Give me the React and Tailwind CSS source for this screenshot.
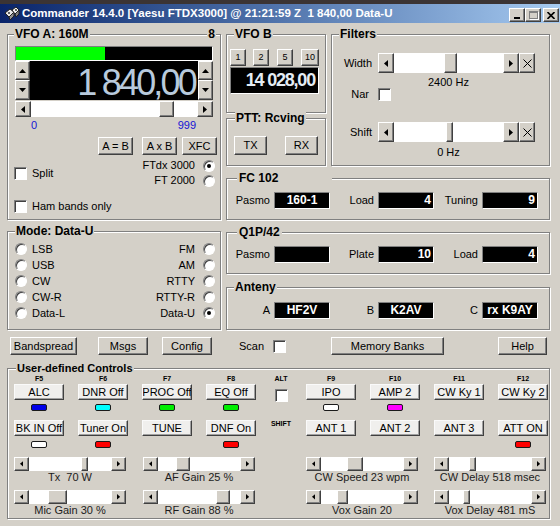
import React from 'react';

// classic 3D borders
const raised = 'border border-t-white border-l-white border-r-[#404040] border-b-[#404040] shadow-[inset_-1px_-1px_0_#808080]';
const sunken = 'border border-t-[#808080] border-l-[#808080] border-r-white border-b-white';

function Group({ title, className = '', tx = 'ml-[6px]', tt = 'text-[12px]', children }) {
  return (
    <div className={`border border-[#808080] shadow-[inset_1px_1px_0_#fff,1px_1px_0_#fff] shrink-0 ${className}`}>
      <div className={`-mt-[8px] w-fit px-[1px] bg-[#d4d0c8] font-bold leading-[14px] whitespace-pre ${tt} ${tx}`}>{title}</div>
      {children}
    </div>
  );
}

function Btn({ className = '', children }) {
  return (
    <div className={`${raised} bg-[#d4d0c8] shrink-0 flex items-center justify-center whitespace-nowrap ${className}`}>
      {children}
    </div>
  );
}

function Arrow({ dir, className = '', small }) {
  const pts = { left: '4,0 0,3.5 4,7', right: '0,0 4,3.5 0,7', up: '0,4 3.5,0 7,4', down: '0,0 3.5,4 7,0' };
  const horiz = dir === 'left' || dir === 'right';
  const s = small ? 0.8 : 1;
  return (
    <div className={`${raised} bg-[#d4d0c8] flex items-center justify-center shrink-0 ${className}`}>
      <svg width={(horiz ? 4 : 7) * s} height={(horiz ? 7 : 4) * s} viewBox={horiz ? '0 0 4 7' : '0 0 7 4'}>
        <polygon points={pts[dir]} fill="#000" />
      </svg>
    </div>
  );
}

function HSlider({ className = '', left, thumb, arrow = 'w-[16px]', small }) {
  return (
    <div className={`flex shrink-0 ${className}`}>
      <Arrow dir="left" className={arrow} small={small} />
      <div className="flex-1 flex bg-white">
        <div className="shrink-0" style={{ width: left }} />
        <div className={`${raised} bg-[#d4d0c8] shrink-0`} style={{ width: thumb }} />
      </div>
      <Arrow dir="right" className={arrow} small={small} />
    </div>
  );
}

function Check({ className = '' }) {
  return <div className={`${sunken} w-[13px] h-[13px] bg-white shrink-0 shadow-[inset_1px_1px_0_#404040] ${className}`} />;
}

function Radio({ checked, className = '' }) {
  return (
    <div className={`w-[12px] h-[12px] rounded-full bg-white shrink-0 flex items-center justify-center ${sunken} shadow-[inset_1px_1px_0_#404040] ${className}`}>
      {checked && <div className="w-[4px] h-[4px] rounded-full bg-black" />}
    </div>
  );
}

function Display({ className = '', children }) {
  return (
    <div className={`${sunken} bg-black text-white font-bold text-[12px] leading-[15px] shrink-0 ${className}`}>{children}</div>
  );
}

function Field({ label, value, w = 'w-[104px]', align = 'justify-end' }) {
  return (
    <div className={`flex items-center justify-end shrink-0 ${w}`}>
      <span>{label}</span>
      <Display className={`ml-[4px] w-[56px] h-[17px] flex items-center px-[2px] ${align}`}>{value}</Display>
    </div>
  );
}

function Led({ color, className = '' }) {
  if (!color) return <div className={`h-[7px] ${className}`} />;
  return <div className={`w-[16px] h-[7px] rounded-[2px] border border-[#1a1a1a] ${color} ${className}`} />;
}

function UBtn({ className = '', children }) {
  return (
    <div className={`w-[50px] h-[16px] bg-[#f0efed] flex items-center justify-center whitespace-nowrap overflow-hidden border border-t-[#fafafa] border-l-[#fafafa] border-r-[#404040] border-b-[#404040] shadow-[inset_-1px_-1px_0_#a0a0a0] text-[11px] ${className}`}>
      {children}
    </div>
  );
}

function UCol({ f, b1, l1, b2, l2 }) {
  return (
    <div className="w-[50px] flex flex-col items-center shrink-0">
      <div className="text-[7px] font-bold leading-[8px] h-[8px]">{f}</div>
      <UBtn className="mt-[1px]">{b1}</UBtn>
      <Led color={l1} className="mt-[4px]" />
      <UBtn className="mt-[9px]">{b2}</UBtn>
      <Led color={l2} className="mt-[5px]" />
    </div>
  );
}

function LSlider({ label, left, thumb }) {
  return (
    <div className="w-[112px] flex flex-col shrink-0">
      <HSlider className="h-[14px]" left={left} thumb={thumb} arrow="w-[15px]" small />
      <div className="text-center leading-[13px] text-[#1c1c1c] whitespace-pre">{label}</div>
    </div>
  );
}

function TitleIcon() {
  return (
    <svg width="16" height="16" viewBox="0 0 16 16" className="shrink-0">
      <path d="M1 7 L6 3 L10 6 L5 11 Z" fill="#e8e8e8" stroke="#202020" strokeWidth="1" />
      <path d="M5 11 L10 6 L10 10 L6 14 Z" fill="#909090" stroke="#202020" strokeWidth="1" />
      <path d="M8 4 L12 1 L15 4 L11 8 Z" fill="#f4f4f4" stroke="#202020" strokeWidth="1" />
      <path d="M11 8 L15 4 L15 8 L12 11 Z" fill="#808080" stroke="#202020" strokeWidth="1" />
      <circle cx="5" cy="7" r="0.9" fill="#202020" />
      <circle cx="12" cy="4" r="0.9" fill="#202020" />
    </svg>
  );
}

export default function App() {
  return (
    <div className="w-[560px] h-[526px] bg-[#d4d0c8] overflow-hidden text-[11px] leading-[13px] text-black font-['Liberation_Sans',Arial,sans-serif]">
      <div className="h-[4px] bg-[#3b3434]" />
      {/* title bar */}
      <div className="h-[19px] flex items-center bg-linear-to-r from-[#0a246a] to-[#a6caf0] pl-[4px] pr-[1px]">
        <TitleIcon />
        <div className="ml-[2px] text-white font-bold text-[11.5px] whitespace-pre">Commander 14.4.0 [Yaesu FTDX3000] @ 21:21:59 Z  1 840,00 Data-U</div>
        <div className="ml-auto flex items-center mt-[3px]">
          <Btn className="w-[16px] h-[14px] items-end pb-[2px]">
            <div className="w-[6px] h-[2px] bg-black" />
          </Btn>
          <Btn className="w-[16px] h-[14px]">
            <div className="w-[9px] h-[8px] border border-[#808080] border-t-2 shadow-[1px_1px_0_#fff]" />
          </Btn>
          <Btn className="w-[16px] h-[14px] ml-[2px]">
            <svg width="8" height="7" viewBox="0 0 8 7">
              <path d="M0.5 0 L7.5 7 M7.5 0 L0.5 7" stroke="#000" strokeWidth="1.6" />
            </svg>
          </Btn>
        </div>
      </div>

      {/* main body */}
      <div className="flex pl-[7px] pt-[11px]">
        {/* left column */}
        <div className="flex flex-col w-[214px] shrink-0">
          <Group title="VFO A: 160M" className="relative w-[214px] h-[186px]">
            <div className="absolute right-[4px] -top-[8px] px-[1px] bg-[#d4d0c8] font-bold text-[12px] leading-[14px]">8</div>
            <div className="px-[7px]">
              <div className={`mt-[5px] h-[15px] bg-black flex ${sunken}`}>
                <div className="w-[89px] bg-[#00ff00]" />
              </div>
              <div className="flex h-[39px]">
                <div className="flex flex-col w-[15px]">
                  <Arrow dir="up" className="h-[19px]" />
                  <Arrow dir="down" className="h-[20px]" />
                </div>
                <div className="flex-1 bg-black text-right pr-[3px] pt-[4px] text-[36px] leading-[36px] tracking-[-2.8px] text-[#b8cadc] whitespace-pre">1 840,00</div>
                <div className="flex flex-col w-[15px]">
                  <Arrow dir="up" className="h-[19px]" />
                  <Arrow dir="down" className="h-[20px]" />
                </div>
              </div>
              <HSlider className="h-[16px] mt-[1px]" left={128} thumb={15} />
              <div className="flex justify-between pl-[16px] pr-[17px] mt-[2px] text-[#1414d4]">
                <span>0</span>
                <span>999</span>
              </div>
              <div className="flex mt-[5px]">
                <Btn className="ml-[83px] w-[35px] h-[18px]">A = B</Btn>
                <Btn className="ml-[9px] w-[35px] h-[18px]">A x B</Btn>
                <Btn className="ml-[5px] w-[35px] h-[18px]">XFC</Btn>
              </div>
              <div className="flex">
                <div className="flex flex-col -ml-[1px]">
                  <div className="flex items-center mt-[12px]">
                    <Check />
                    <span className="ml-[5px]">Split</span>
                  </div>
                  <div className="flex items-center mt-[20px]">
                    <Check />
                    <span className="ml-[5px]">Ham bands only</span>
                  </div>
                </div>
                <div className="ml-auto -mr-[2px] flex flex-col items-end">
                  <div className="flex items-center mt-[4px]">
                    <span>FTdx 3000</span>
                    <Radio checked className="ml-[8px]" />
                  </div>
                  <div className="flex items-center mt-[2px]">
                    <span>FT 2000</span>
                    <Radio className="ml-[8px]" />
                  </div>
                </div>
              </div>
            </div>
          </Group>

          <Group title="Mode: Data-U" className="mt-[11px] w-[214px] h-[99px]" tx="ml-[7px]">
            <div className="px-[7px] mt-[3px]">
              {[
                ['LSB', 'FM', false],
                ['USB', 'AM', false],
                ['CW', 'RTTY', false],
                ['CW-R', 'RTTY-R', false],
                ['Data-L', 'Data-U', true],
              ].map(([a, b, on]) => (
                <div key={a} className="flex items-center h-[16px] -mr-[2px]">
                  <Radio />
                  <span className="ml-[5px]">{a}</span>
                  <span className="ml-auto">{b}</span>
                  <Radio checked={on} className="ml-[8px]" />
                </div>
              ))}
            </div>
          </Group>
        </div>

        {/* right column */}
        <div className="ml-[5px] flex flex-col w-[324px] shrink-0">
          <div className="flex">
            <div className="flex flex-col w-[100px] shrink-0">
              <Group title="VFO B" className="w-[100px] h-[79px]" tx="ml-[7px]">
                <div className="flex mt-[8px] ml-[3px] text-[9px]">
                  <Btn className="w-[16px] h-[17px]">1</Btn>
                  <Btn className="ml-[7px] w-[16px] h-[17px]">2</Btn>
                  <Btn className="ml-[8px] w-[16px] h-[17px]">5</Btn>
                  <Btn className="ml-[8px] w-[18px] h-[17px]">10</Btn>
                </div>
                <div className={`mt-[1px] ml-[3px] w-[89px] h-[27px] bg-black ${sunken} text-right pr-[3px] text-[18px] leading-[25px] font-bold tracking-[-1.2px] text-[#e4ecf4] whitespace-pre`}>14 028,00</div>
              </Group>
              <Group title="PTT: Rcving" className="mt-[5px] w-[100px] h-[48px]" tx="ml-[8px]">
                <div className="flex mt-[11px]">
                  <Btn className="ml-[7px] w-[33px] h-[19px]">TX</Btn>
                  <Btn className="ml-[18px] w-[33px] h-[19px]">RX</Btn>
                </div>
              </Group>
            </div>

            <Group title="Filters" className="ml-[5px] w-[219px] h-[132px]" tx="ml-[7px]">
              <div className="flex items-center mt-[12px]">
                <span className="w-[40px] text-right">Width</span>
                <HSlider className="ml-[6px] w-[141px] h-[20px]" left={50} thumb={13} />
                <Btn className="w-[16px] h-[20px]">
                  <svg width="9" height="9" viewBox="0 0 9 9"><path d="M0.5 0.5 L8.5 8.5 M8.5 0.5 L0.5 8.5" stroke="#000" strokeWidth="1" /></svg>
                </Btn>
              </div>
              <div className="ml-[46px] w-[141px] text-center mt-[4px] leading-[11px]">2400 Hz</div>
              <div className="flex items-center">
                <span className="w-[40px] text-right pr-[3px]">Nar</span>
                <Check className="ml-[6px]" />
              </div>
              <div className="flex items-center mt-[21px]">
                <span className="w-[40px] text-right">Shift</span>
                <HSlider className="ml-[6px] w-[141px] h-[20px]" left={52} thumb={7} />
                <Btn className="w-[16px] h-[20px]">
                  <svg width="9" height="9" viewBox="0 0 9 9"><path d="M0.5 0.5 L8.5 8.5 M8.5 0.5 L0.5 8.5" stroke="#000" strokeWidth="1" /></svg>
                </Btn>
              </div>
              <div className="ml-[46px] w-[141px] text-center mt-[4px] leading-[12px]">0 Hz</div>
            </Group>
          </div>

          <Group title="FC 102" className="mt-[12px] w-[324px] h-[42px]" tx="ml-[10px] pl-[2px] pr-[54px]">
            <div className="flex mt-[7px]">
              <Field label="Pasmo" value="160-1" w="w-[103px]" align="justify-center" />
              <Field label="Load" value="4" />
              <Field label="Tuning" value="9" />
            </div>
          </Group>

          <Group title="Q1P/42" className="mt-[12px] w-[324px] h-[42px]" tx="ml-[10px] pl-[2px] pr-[2px]">
            <div className="flex mt-[7px]">
              <Field label="Pasmo" value="" w="w-[103px]" />
              <Field label="Plate" value="10" />
              <Field label="Load" value="4" />
            </div>
          </Group>

          <Group title="Anteny" className="mt-[13px] w-[324px] h-[43px]" tx="ml-[7px]">
            <div className="flex mt-[8px]">
              <Field label="A" value="HF2V" w="w-[103px]" align="justify-center" />
              <Field label="B" value="K2AV" align="justify-center" />
              <Field label="C" value="rx K9AY" align="justify-center" />
            </div>
          </Group>
        </div>
      </div>

      {/* button row */}
      <div className="flex items-center mt-[7px] h-[18px] pl-[7px]">
        <Btn className="ml-[3px] w-[67px] h-[18px]">Bandspread</Btn>
        <Btn className="ml-[21px] w-[50px] h-[18px]">Msgs</Btn>
        <Btn className="ml-[14px] w-[50px] h-[18px]">Config</Btn>
        <span className="ml-[27px] w-[34px]">Scan</span>
        <Check />
        <Btn className="ml-[45px] w-[113px] h-[18px]">Memory Banks</Btn>
        <Btn className="ml-[54px] w-[49px] h-[18px]">Help</Btn>
      </div>

      {/* user-defined controls */}
      <div className="pl-[7px] mt-[13px]">
        <Group title="User-defined Controls" className="w-[543px] h-[151px]" tx="ml-[8px]" tt="text-[11px]">
          <div className="flex pl-[6px]">
            <div className="flex gap-[14px] w-[242px] shrink-0">
              <UCol f="F5" b1="ALC" l1="bg-[#0000e8]" b2="BK IN Off" l2="bg-white" />
              <UCol f="F6" b1="DNR Off" l1="bg-[#00ffff]" b2="Tuner On" l2="bg-[#ff0000]" />
              <UCol f="F7" b1="PROC Off" l1="bg-[#00ee00]" b2="TUNE" />
              <UCol f="F8" b1="EQ Off" l1="bg-[#00ee00]" b2="DNF On" l2="bg-[#ff0000]" />
            </div>
            <div className="w-[50px] flex flex-col items-center shrink-0">
              <div className="text-[7px] font-bold leading-[8px] h-[8px]">ALT</div>
              <Check className="mt-[6px]" />
              <div className="mt-[18px] text-[7px] font-bold leading-[8px]">SHIFT</div>
            </div>
            <div className="flex gap-[14px] w-[242px] shrink-0">
              <UCol f="F9" b1="IPO" l1="bg-white" b2="ANT 1" />
              <UCol f="F10" b1="AMP 2" l1="bg-[#ff00ff]" b2="ANT 2" />
              <UCol f="F11" b1="CW Ky 1" b2="ANT 3" />
              <UCol f="F12" b1="CW Ky 2" b2="ATT ON" l2="bg-[#ff0000]" />
            </div>
          </div>

          <div className="flex pl-[6px] mt-[9px]">
            <div className="flex gap-[17px] w-[242px] shrink-0">
              <LSlider label="Tx  70 W" left={52} thumb={7} />
              <LSlider label="AF Gain 25 %" left={18} thumb={14} />
            </div>
            <div className="w-[50px] shrink-0" />
            <div className="flex gap-[16px] w-[242px] shrink-0">
              <LSlider label="CW Speed 23 wpm" left={26} thumb={16} />
              <LSlider label="CW Delay 518 msec" left={20} thumb={7} />
            </div>
          </div>

          <div className="flex pl-[6px] mt-[6px]">
            <div className="flex gap-[17px] w-[242px] shrink-0">
              <LSlider label="Mic Gain 30 %" left={19} thumb={19} />
              <LSlider label="RF Gain 88 %" left={58} thumb={14} />
            </div>
            <div className="w-[50px] shrink-0" />
            <div className="flex gap-[16px] w-[242px] shrink-0">
              <LSlider label="Vox Gain 20" left={16} thumb={11} />
              <LSlider label="Vox Delay 481 mS" left={14} thumb={7} />
            </div>
          </div>
        </Group>
      </div>
    </div>
  );
}
